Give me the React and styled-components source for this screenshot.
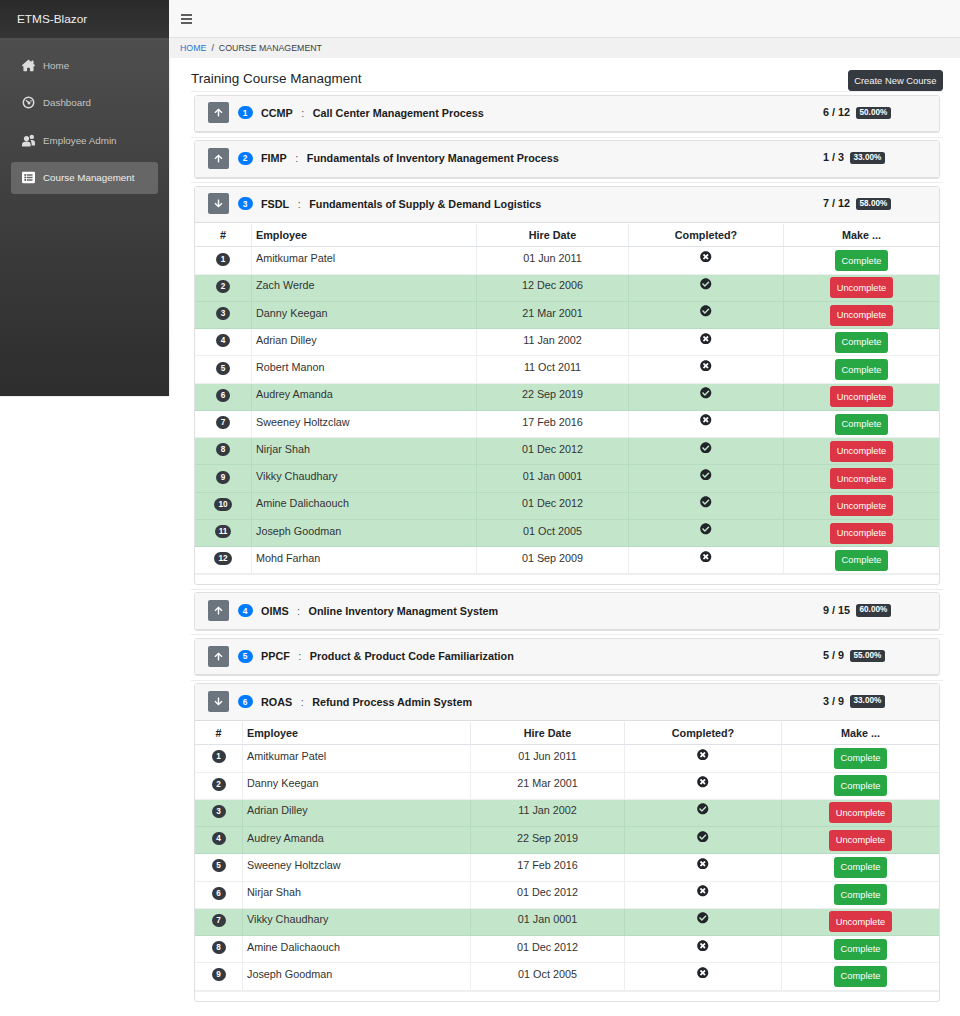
import styled, { createGlobalStyle } from "styled-components";
import {
  FaArrowUp,
  FaArrowDown,
  FaCheckCircle,
  FaTimesCircle,
  FaListAlt,
} from "react-icons/fa";
import { FaHouseChimney } from "react-icons/fa6";

const GlobalStyle = createGlobalStyle`
  html, body { margin: 0; padding: 0; background: #fff; }
  body {
    font-family: "Liberation Sans", Arial, sans-serif;
    font-size: 10.8px;
    color: #212529;
  }
  * { box-sizing: border-box; }
`;

const GaugeIcon = () => (
  <svg width="13" height="13" viewBox="0 0 13 13">
    <circle cx="6.5" cy="6.5" r="5.2" fill="none" stroke="currentColor" strokeWidth="1.5" />
    <path d="M4 4.2 L7 6.8" stroke="currentColor" strokeWidth="1.3" />
    <circle cx="7" cy="7" r="1.5" fill="currentColor" />
    <circle cx="9" cy="5" r="0.8" fill="currentColor" />
  </svg>
);

const PeopleIcon = () => (
  <svg width="13" height="13" viewBox="0 0 13 13">
    <circle cx="4.5" cy="4.6" r="2.6" fill="currentColor" />
    <path d="M0 12.6 V10.4 C0 8.6 1.6 7.6 4.5 7.6 C7.4 7.6 8.6 8.6 8.6 10.4 V12.6 Z" fill="currentColor" />
    <circle cx="9.8" cy="2.9" r="2.2" fill="currentColor" />
    <path d="M8.4 6.2 C10.6 5.4 13 6.4 13 8.4 V11.6 H9.6 V10 C9.6 8.4 9.2 7.2 8.4 6.2 Z" fill="currentColor" />
  </svg>
);

const MenuIcon = () => (
  <svg width="11" height="10" viewBox="0 0 11 10">
    <path d="M0 1 H11 M0 5 H11 M0 9 H11" stroke="#2b2b2b" strokeWidth="1.3" />
  </svg>
);

const NAV = [
  { id: 1, label: "Home", Icon: () => <FaHouseChimney size={13} /> },
  { id: 2, label: "Dashboard", Icon: GaugeIcon },
  { id: 3, label: "Employee Admin", Icon: PeopleIcon },
  { id: 4, label: "Course Management", Icon: () => <FaListAlt size={13} />, active: true },
];

const FSDL_ROWS = [
  ["Amitkumar Patel", "01 Jun 2011", false],
  ["Zach Werde", "12 Dec 2006", true],
  ["Danny Keegan", "21 Mar 2001", true],
  ["Adrian Dilley", "11 Jan 2002", false],
  ["Robert Manon", "11 Oct 2011", false],
  ["Audrey Amanda", "22 Sep 2019", true],
  ["Sweeney Holtzclaw", "17 Feb 2016", false],
  ["Nirjar Shah", "01 Dec 2012", true],
  ["Vikky Chaudhary", "01 Jan 0001", true],
  ["Amine Dalichaouch", "01 Dec 2012", true],
  ["Joseph Goodman", "01 Oct 2005", true],
  ["Mohd Farhan", "01 Sep 2009", false],
];

const ROAS_ROWS = [
  ["Amitkumar Patel", "01 Jun 2011", false],
  ["Danny Keegan", "21 Mar 2001", false],
  ["Adrian Dilley", "11 Jan 2002", true],
  ["Audrey Amanda", "22 Sep 2019", true],
  ["Sweeney Holtzclaw", "17 Feb 2016", false],
  ["Nirjar Shah", "01 Dec 2012", false],
  ["Vikky Chaudhary", "01 Jan 0001", true],
  ["Amine Dalichaouch", "01 Dec 2012", false],
  ["Joseph Goodman", "01 Oct 2005", false],
];

const COURSES = [
  { id: 1, code: "CCMP", name: "Call Center Management Process", score: "6 / 12", pct: "50.00%" },
  { id: 2, code: "FIMP", name: "Fundamentals of Inventory Management Process", score: "1 / 3", pct: "33.00%" },
  {
    id: 3,
    code: "FSDL",
    name: "Fundamentals of Supply & Demand Logistics",
    score: "7 / 12",
    pct: "58.00%",
    rows: FSDL_ROWS,
    cols: [56, 225, 152, 155, 156],
  },
  { id: 4, code: "OIMS", name: "Online Inventory Managment System", score: "9 / 15", pct: "60.00%" },
  { id: 5, code: "PPCF", name: "Product & Product Code Familiarization", score: "5 / 9", pct: "55.00%" },
  {
    id: 6,
    code: "ROAS",
    name: "Refund Process Admin System",
    score: "3 / 9",
    pct: "33.00%",
    rows: ROAS_ROWS,
    cols: [47, 228, 154, 157, 158],
  },
];

export default function App() {
  return (
    <>
      <GlobalStyle />
      <Page>
        <Sidebar>
          <Brand>ETMS-Blazor</Brand>
          <Nav>
            {NAV.map(({ id, label, Icon, active }) => (
              <NavItem key={id} $active={active}>
                <Icon />
                <span>{label}</span>
              </NavItem>
            ))}
          </Nav>
        </Sidebar>
        <Main>
          <TopBar>
            <MenuIcon />
          </TopBar>
          <Breadcrumb>
            <a>HOME</a>
            <Slash>/</Slash>
            <span>COURSE MANAGEMENT</span>
          </Breadcrumb>
          <Content>
            <TitleRow>
              <Title>Training Course Managment</Title>
              <CreateButton>Create New Course</CreateButton>
            </TitleRow>
            {COURSES.map((course) => (
              <Course key={course.id} course={course} />
            ))}
          </Content>
        </Main>
      </Page>
    </>
  );
}

const Course = ({ course }) => {
  const open = Boolean(course.rows);
  return (
    <>
      <Rule />
      <Card>
        <CardHeader>
          <Toggle>{open ? <FaArrowDown size={9} /> : <FaArrowUp size={9} />}</Toggle>
          <Number>{course.id}</Number>
          <Code>{course.code}</Code>
          <Colon>:</Colon>
          <Name>{course.name}</Name>
          <Score>
            <span>{course.score}</span>
            <Percent>{course.pct}</Percent>
          </Score>
        </CardHeader>
        {open && (
          <CardBody>
            <Table>
              <colgroup>
                {course.cols.map((w, i) => (
                  <Col key={i} $w={w} />
                ))}
              </colgroup>
              <thead>
                <tr>
                  <Th $center>#</Th>
                  <Th>Employee</Th>
                  <Th $center>Hire Date</Th>
                  <Th $center>Completed?</Th>
                  <Th $center>Make ...</Th>
                </tr>
              </thead>
              <tbody>
                {course.rows.map(([name, date, done], i) => (
                  <Row key={name} $done={done}>
                    <Td $center>
                      <RowNumber>{i + 1}</RowNumber>
                    </Td>
                    <Td>{name}</Td>
                    <Td $center>{date}</Td>
                    <Td $center>
                      {done ? <FaCheckCircle size={11.5} /> : <FaTimesCircle size={11.5} />}
                    </Td>
                    <ActionCell>
                      <ActionButton $done={done}>{done ? "Uncomplete" : "Complete"}</ActionButton>
                    </ActionCell>
                  </Row>
                ))}
              </tbody>
            </Table>
          </CardBody>
        )}
      </Card>
    </>
  );
};

const Page = styled.div`
  display: flex;
  align-items: flex-start;
  width: 960px;
  min-height: 1016px;
`;

const Sidebar = styled.aside`
  flex: 0 0 169px;
  height: 396px;
  display: flex;
  flex-direction: column;
  box-shadow: 0 0 2px rgba(0, 0, 0, 0.2);
`;

const Brand = styled.div`
  height: 38px;
  padding: 0 17px;
  display: flex;
  align-items: center;
  background: linear-gradient(180deg, #2a2a2a 0%, #353535 100%);
  color: #f0f0f0;
  font-size: 11.8px;
`;

const Nav = styled.nav`
  flex: 1;
  display: flex;
  flex-direction: column;
  gap: 5.5px;
  padding: 11px 11px 0;
  background: linear-gradient(180deg, #4e4e4e 0%, #2d2d2d 100%);
`;

const NavItem = styled.div`
  height: 32px;
  display: flex;
  align-items: center;
  gap: 8px;
  padding-left: 11px;
  border-radius: 3px;
  font-size: 9.8px;
  color: ${(p) => (p.$active ? "#f0f0f0" : "#c4c4c4")};
  background: ${(p) => (p.$active ? "#666666" : "transparent")};
  svg {
    flex: none;
    color: ${(p) => (p.$active ? "#ffffff" : "#dcdcdc")};
  }
`;

const Main = styled.main`
  flex: 1;
  min-width: 0;
`;

const TopBar = styled.div`
  height: 38px;
  padding-left: 11.5px;
  display: flex;
  align-items: center;
  background: #f8f8f8;
  border-bottom: 1px solid #e4e4e4;
`;

const Breadcrumb = styled.div`
  height: 20px;
  padding-left: 11px;
  display: flex;
  align-items: center;
  background: #f1f1f1;
  font-size: 8.8px;
  color: #3a3f44;
  a {
    color: #2a76d6;
  }
`;

const Slash = styled.span`
  margin: 0 5px;
`;

const Content = styled.div`
  padding: 11.5px 17px 0 22px;
`;

const TitleRow = styled.div`
  display: flex;
  justify-content: space-between;
  align-items: flex-start;
  height: 21.5px;
`;

const Title = styled.h1`
  margin: 0;
  font-size: 13.5px;
  font-weight: 400;
  line-height: 17px;
  color: #212529;
`;

const CreateButton = styled.button`
  height: 21px;
  padding: 0 5.5px;
  border: 1px solid #343a40;
  border-radius: 3px;
  background: #343a40;
  color: #f4f4f4;
  font: 400 9.4px "Liberation Sans", Arial, sans-serif;
`;

const Rule = styled.hr`
  margin: 0 0 2.5px;
  border: 0;
  border-top: 1px solid #ececec;
`;

const Card = styled.section`
  margin: 0 3px 3.5px;
  border: 1px solid #e0e0e0;
  border-radius: 3px;
  background: #fff;
`;

const CardHeader = styled.header`
  height: 36.5px;
  display: flex;
  align-items: center;
  padding: 0 0 1px 13px;
  background: #f7f7f7;
  border-bottom: 1.5px solid #dedede;
  font-weight: 700;
  font-size: 10.8px;
  color: #1c1c1c;
`;

const Toggle = styled.span`
  width: 21px;
  height: 21px;
  margin-right: 8.5px;
  display: flex;
  align-items: center;
  justify-content: center;
  background: #6c757d;
  border-radius: 2px;
  color: #fff;
`;

const Number = styled.span`
  width: 15px;
  height: 13px;
  margin-right: 8.5px;
  border-radius: 7px;
  display: flex;
  align-items: center;
  justify-content: center;
  background: #007bff;
  color: #fff;
  font-size: 8.4px;
`;

const Code = styled.span``;

const Colon = styled.span`
  margin: 0 8.5px;
  font-weight: 400;
  color: #555;
`;

const Name = styled.span`
  flex: 1;
`;

const Score = styled.div`
  display: flex;
  align-items: center;
  gap: 6px;
  width: 116px;
  margin-bottom: 2px;
`;

const Percent = styled.span`
  margin-top: 2px;
  padding: 2px 3.5px;
  border-radius: 2.5px;
  background: #343a40;
  color: #fff;
  font-size: 8.2px;
  line-height: 8.4px;
`;

const CardBody = styled.div`
  padding: 1px 0 9px;
`;

const Table = styled.table`
  width: 100%;
  table-layout: fixed;
  border-collapse: separate;
  border-spacing: 0;
  border-bottom: 1px solid #eeeff0;
`;

const Col = styled.col`
  width: ${(p) => p.$w}px;
`;

const Th = styled.th`
  height: 23.4px;
  padding: 0 4px;
  font-size: 10.8px;
  font-weight: 700;
  text-align: ${(p) => (p.$center ? "center" : "left")};
  border-bottom: 1.5px solid #dee2e6;
  border-left: 1px solid #e9ecef;
  color: #212529;
  &:first-child {
    border-left: 0;
  }
`;

const Row = styled.tr`
  background: ${(p) => (p.$done ? "#c3e6cb" : "#fff")};
  color: #333;
  td {
    border-color: ${(p) => (p.$done ? "#b5dcc0" : "#eceeef")};
  }
`;

const Td = styled.td`
  height: 27.25px;
  padding: 0 4px 5px;
  font-size: 10.8px;
  text-align: ${(p) => (p.$center ? "center" : "left")};
  border-bottom: 1px solid;
  border-left: 1px solid;
  &:first-child {
    border-left: 0;
  }
  svg {
    color: #212529;
    vertical-align: middle;
    position: relative;
    top: -2px;
  }
`;

const ActionCell = styled(Td)`
  padding: 0;
  text-align: center;
`;

const RowNumber = styled.span`
  display: inline-block;
  position: relative;
  top: 0.5px;
  min-width: 14px;
  padding: 2px 4px;
  border-radius: 7px;
  background: #343a40;
  color: #fff;
  font-size: 8.2px;
  font-weight: 700;
  line-height: 9px;
`;

const ActionButton = styled.button`
  height: 21px;
  padding: 0 5.5px;
  border: 1px solid ${(p) => (p.$done ? "#dc3545" : "#28a745")};
  border-radius: 2.5px;
  background: ${(p) => (p.$done ? "#dc3545" : "#28a745")};
  color: #fff;
  font: 400 9.3px "Liberation Sans", Arial, sans-serif;
  vertical-align: middle;
`;
